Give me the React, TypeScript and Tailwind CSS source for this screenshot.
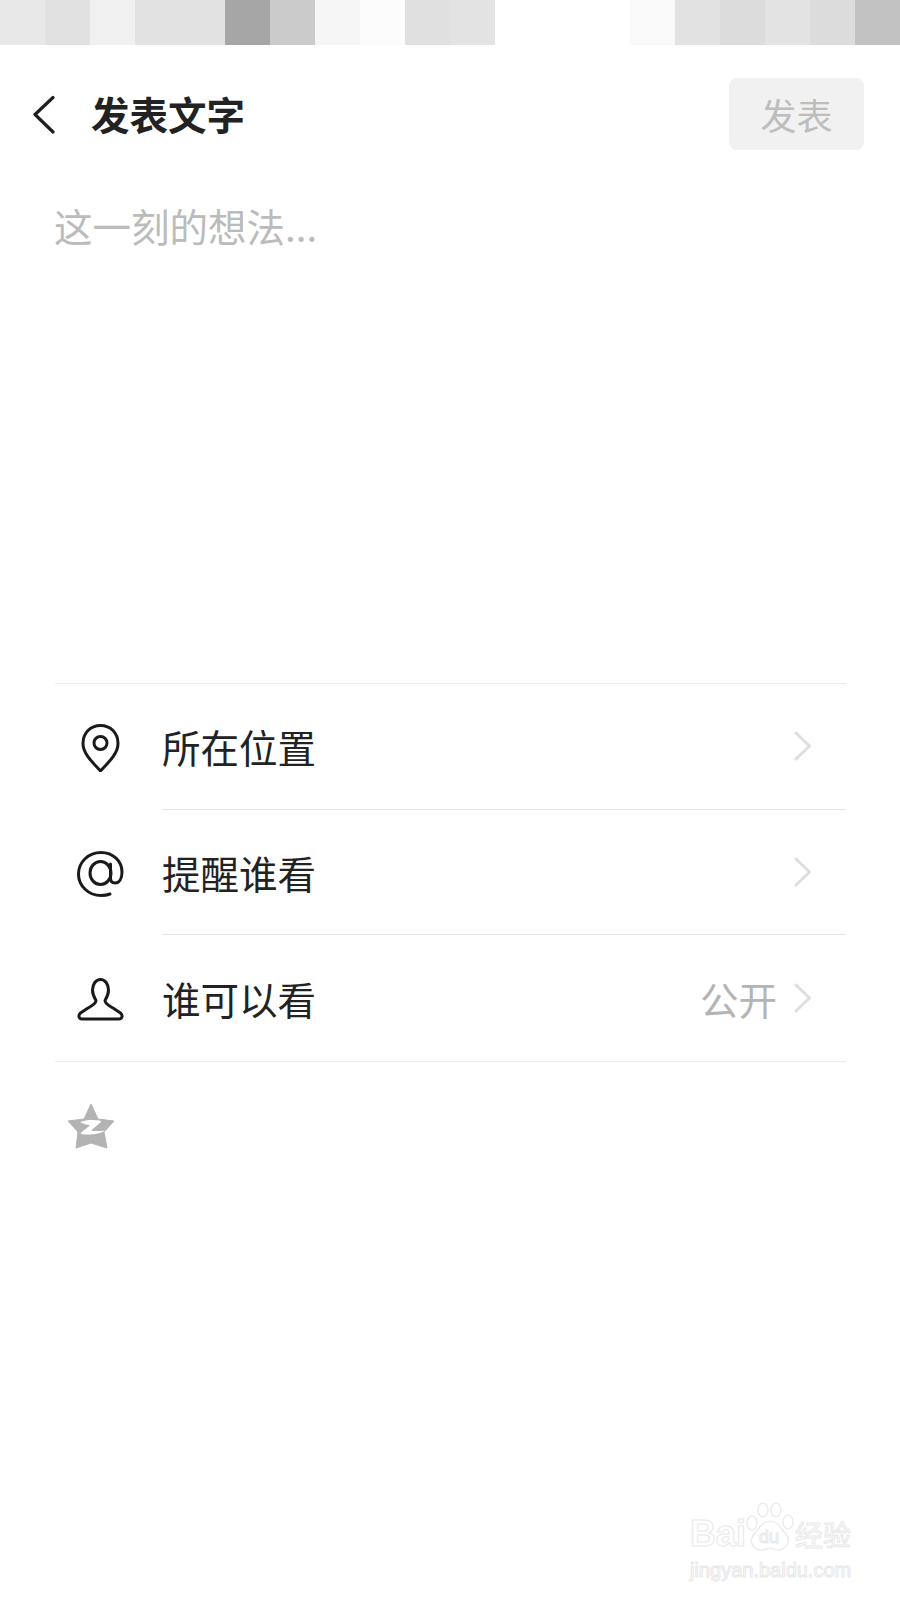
const mosaic = [
  "bg-[#e8e8e8]",
  "bg-[#e1e1e1]",
  "bg-[#f0f0f0]",
  "bg-[#e2e2e2]",
  "bg-[#e2e2e2]",
  "bg-[#a6a6a6]",
  "bg-[#cbcbcb]",
  "bg-[#f6f6f6]",
  "bg-[#fcfcfc]",
  "bg-[#e0e0e0]",
  "bg-[#e3e3e3]",
  "bg-white",
  "bg-white",
  "bg-white",
  "bg-[#f9f9f9]",
  "bg-[#e2e2e2]",
  "bg-[#dcdcdc]",
  "bg-[#e3e3e3]",
  "bg-[#dcdcdc]",
  "bg-[#c2c2c2]",
];

function PinIcon() {
  return (
    <svg width="48" height="48" viewBox="0 0 48 48" fill="none" stroke="#1a1a1a" strokeWidth="3">
      <path d="M23.5 47 C17 39.5 6 30.5 6 19.5 C6 9 13.5 1.5 23.5 1.5 C33.5 1.5 41 9 41 19.5 C41 30.5 30 39.5 23.5 47 Z" strokeLinejoin="round" />
      <circle cx="23.5" cy="19" r="6.5" />
    </svg>
  );
}

function AtIcon() {
  return (
    <svg width="48" height="48" viewBox="0 0 48 48" fill="none" stroke="#1a1a1a" strokeWidth="3" strokeLinecap="round">
      <path d="M33 44 C30.5 45 27.5 45.5 24 45.5 C11.5 45.5 1.5 36 1.5 24 C1.5 12 11.5 2.5 24 2.5 C36 2.5 45 11 45 22 C45 29 42 33 38 33 C35 33 33.5 31 33.5 28 L33.5 14" />
      <ellipse cx="23.5" cy="23" rx="10.5" ry="11.5" />
    </svg>
  );
}

function PersonIcon() {
  return (
    <svg width="48" height="48" viewBox="0 0 48 48" fill="none" stroke="#1a1a1a" strokeWidth="3" strokeLinejoin="round" className="translate-y-[2px]">
      <path d="M15.5 13 C15.5 7 19 2.5 23.5 2.5 C28 2.5 31.5 7 31.5 13 C31.5 18 29.5 21 28 23.5 C28 27 32 28.5 36 31 L43.5 36 C46 38 45.5 42 42 42 L5 42 C1.5 42 1 38 3.5 36 L11 31 C15 28.5 19 27 19 23.5 C17.5 21 15.5 18 15.5 13 Z" />
    </svg>
  );
}

function Chevron() {
  return (
    <svg width="18" height="30" viewBox="0 0 18 30" fill="none" stroke="#dedede" strokeWidth="3" strokeLinecap="round" strokeLinejoin="round">
      <path d="M2 2 L15.5 15 L2 28" />
    </svg>
  );
}

function Row({
  icon,
  label,
  value,
  last,
}: {
  icon: React.ReactNode;
  label: string;
  value?: string;
  last?: boolean;
}) {
  return (
    <div className="flex h-[125.5px]">
      <div className="flex w-[107px] shrink-0 items-center pl-[22px] pt-[3px]">{icon}</div>
      <div className={`flex flex-1 items-center pr-[34px] ${last ? "" : "border-b border-[#e6e6e6]"}`}>
        <span className="flex-1 text-[38.5px] leading-none text-[#222222]">{label}</span>
        {value && <span className="mr-[17px] text-[38.5px] leading-none text-[#b4b4b4]">{value}</span>}
        <Chevron />
      </div>
    </div>
  );
}

function Watermark() {
  const outline = "text-white [-webkit-text-stroke:1px_#e8e8e8] font-['Liberation_Sans','Noto_Sans_CJK_SC',sans-serif]";
  return (
    <div className="absolute left-[690px] top-[1502px] w-[166px]">
      <div className="flex items-end">
        <span className={`text-[36px] font-bold leading-[36px] ${outline}`}>Bai</span>
        <div className="relative -ml-[1px] h-[50px] w-[50px]">
          <svg width="50" height="50" viewBox="0 0 50 50" fill="#ffffff" stroke="#e8e8e8" strokeWidth="1.2">
            <ellipse cx="7" cy="21" rx="5" ry="7" />
            <ellipse cx="18" cy="8" rx="5" ry="7" />
            <ellipse cx="31" cy="8" rx="5" ry="7" />
            <ellipse cx="43" cy="20" rx="5" ry="7" />
            <path d="M25 19 C33 19 36 27 41 32 C46 38 42 48 33 48 C28 48 27 46 25 46 C23 46 21 48 16 48 C7 48 4 38 9 32 C14 27 17 19 25 19 Z" />
          </svg>
          <span className={`absolute left-[14px] top-[26px] text-[18px] leading-[18px] ${outline}`}>du</span>
        </div>
        <span className={`text-[28px] leading-[30px] ${outline}`}>经验</span>
      </div>
      <p className={`mt-[8px] whitespace-nowrap text-[20px] leading-[20px] ${outline}`}>jingyan.baidu.com</p>
    </div>
  );
}

export default function App() {
  return (
    <div className="relative h-[1600px] w-[900px] overflow-hidden bg-white font-['Noto_Sans_CJK_SC',sans-serif]">
      <div className="flex h-[45px]">
        {mosaic.map((color, i) => (
          <div key={i} className={`w-[45px] ${color}`}></div>
        ))}
      </div>

      <header className="flex items-center pl-[32px] pr-[36px] pt-[33px]">
        <svg width="26" height="40" viewBox="0 0 26 40" fill="none" stroke="#1f1f1f" strokeWidth="3.2" strokeLinecap="round" strokeLinejoin="round">
          <path d="M21 3.5 L3 20.5 L21 38" />
        </svg>
        <h1 className="ml-[33px] flex-1 pb-[2px] text-[38.5px] font-semibold leading-none text-[#222222]">发表文字</h1>
        <button className="flex h-[72px] w-[135px] items-center justify-center rounded-[8px] bg-[#f1f1f1] text-[36px] leading-none text-[#bdbdbd]">
          发表
        </button>
      </header>

      <div className="h-[533px] pl-[54px] pt-[35px] text-[38.5px] leading-[80px] text-[#bbbbbb]">这一刻的想法...</div>

      <div className="ml-[55px] w-[791px] border-y border-[#ececec]">
        <Row icon={<PinIcon />} label="所在位置" />
        <Row icon={<AtIcon />} label="提醒谁看" />
        <Row icon={<PersonIcon />} label="谁可以看" value="公开" last />
      </div>

      <div className="pl-[68px] pt-[42px]">
        <svg width="46" height="46" viewBox="0 0 46 46">
          <path d="M23 0 L30 15 L46 17 L36 28 L39 44 L23 39 L8 44 L10 28 L0 17 L16 15 Z" fill="#b3b3b3" stroke="#b3b3b3" strokeWidth="1" strokeLinejoin="round" />
          <path d="M12 18 C18 15.5 26 15.5 32 16.5 L33 18 L23 26.5 C27 27.5 33 27 37 26.5 C32 30 22 31.5 13 30 L13 28.5 L22 21.5 C19 20.5 15 20 12 18 Z" fill="#ffffff" />
        </svg>
      </div>

      <Watermark />
    </div>
  );
}
